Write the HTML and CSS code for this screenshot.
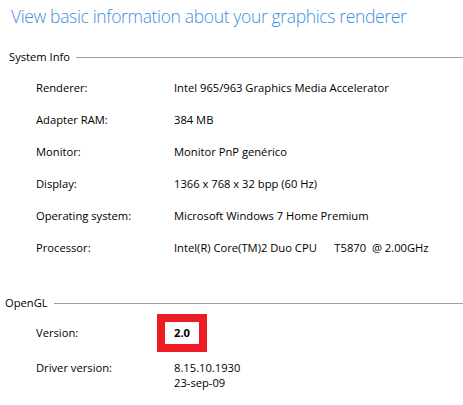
FILE: index.html
```html
<!DOCTYPE html>
<html>
<head>
<meta charset="utf-8">
<link rel="stylesheet" href="styles.css">
</head>
<body>
<div class="page">
  <h1 class="title">View basic information about your graphics renderer</h1>

  <section class="group sys">
    <div class="group-head"><span class="group-name">System Info</span><span class="rule"></span></div>
    <div class="rows">
      <div class="row"><span class="label">Renderer:</span><span class="value">Intel 965/963 Graphics Media Accelerator</span></div>
      <div class="row"><span class="label">Adapter RAM:</span><span class="value">384 MB</span></div>
      <div class="row"><span class="label">Monitor:</span><span class="value">Monitor PnP genérico</span></div>
      <div class="row"><span class="label">Display:</span><span class="value">1366 x 768 x 32 bpp (60 Hz)</span></div>
      <div class="row"><span class="label">Operating system:</span><span class="value">Microsoft Windows 7 Home Premium</span></div>
      <div class="row"><span class="label">Processor:</span><span class="value pre">Intel(R) Core(TM)2 Duo CPU     <span class="cpu-gap"></span>T5870  @ 2.00GHz</span></div>
    </div>
  </section>

  <section class="group gl">
    <div class="group-head"><span class="group-name">OpenGL</span><span class="rule"></span></div>
    <div class="gl-rows">
      <div class="row ver"><span class="label">Version:</span><span class="value"><span class="hl">2.0</span></span></div>
      <div class="row drv"><span class="label">Driver version:</span><span class="value">8.15.10.1930<br>23-sep-09</span></div>
    </div>
  </section>
</div>
</body>
</html>
```

FILE: styles.css
```css
html, body {
  margin: 0;
  padding: 0;
  background: #ffffff;
}
.page {
  width: 463px;
  height: 405px;
  overflow: hidden;
  font-family: "Open Sans", "Liberation Sans", sans-serif;
  font-size: 11.2px;
  color: #000000;
}
.title {
  margin: 0;
  padding: 3px 0 0 11px;
  height: 40px;
  box-sizing: border-box;
  font-size: 17.5px;
  font-weight: 300;
  color: #3d8fe0;
  line-height: 26px;
  letter-spacing: -0.35px;
  white-space: nowrap;
}
.group-head {
  display: flex;
  align-items: center;
  height: 16px;
  line-height: 16px;
}
.sys .group-head {
  margin-top: 9px;
  padding-left: 9px;
}
.gl .group-head {
  margin-top: 0;
  padding-left: 5px;
}
.group-name {
  flex: none;
  padding-right: 6px;
}
.rule {
  flex: 1;
  height: 0;
  border-top: 1px solid #a0a0a0;
  margin-top: 1px;
}
.rows {
  padding-top: 7px;
  height: 223px;
}
.row {
  display: grid;
  grid-template-columns: 138px 1fr;
  padding-left: 36px;
  height: 32px;
  align-items: center;
  line-height: 16px;
}
.pre {
  white-space: pre;
}
.cpu-gap {
  display: inline-block;
  width: 3px;
}
.gl-rows {
  padding-top: 2px;
}
.row.ver {
  height: 40px;
  grid-template-columns: 121px 1fr;
}
.hl {
  display: inline-block;
  border: 8px solid #ed1c24;
  padding: 3px 9px 3px 9px;
  font-weight: 700;
  line-height: 16px;
}
.row.drv {
  height: auto;
  align-items: start;
  padding-top: 7px;
  line-height: 15px;
}
```
